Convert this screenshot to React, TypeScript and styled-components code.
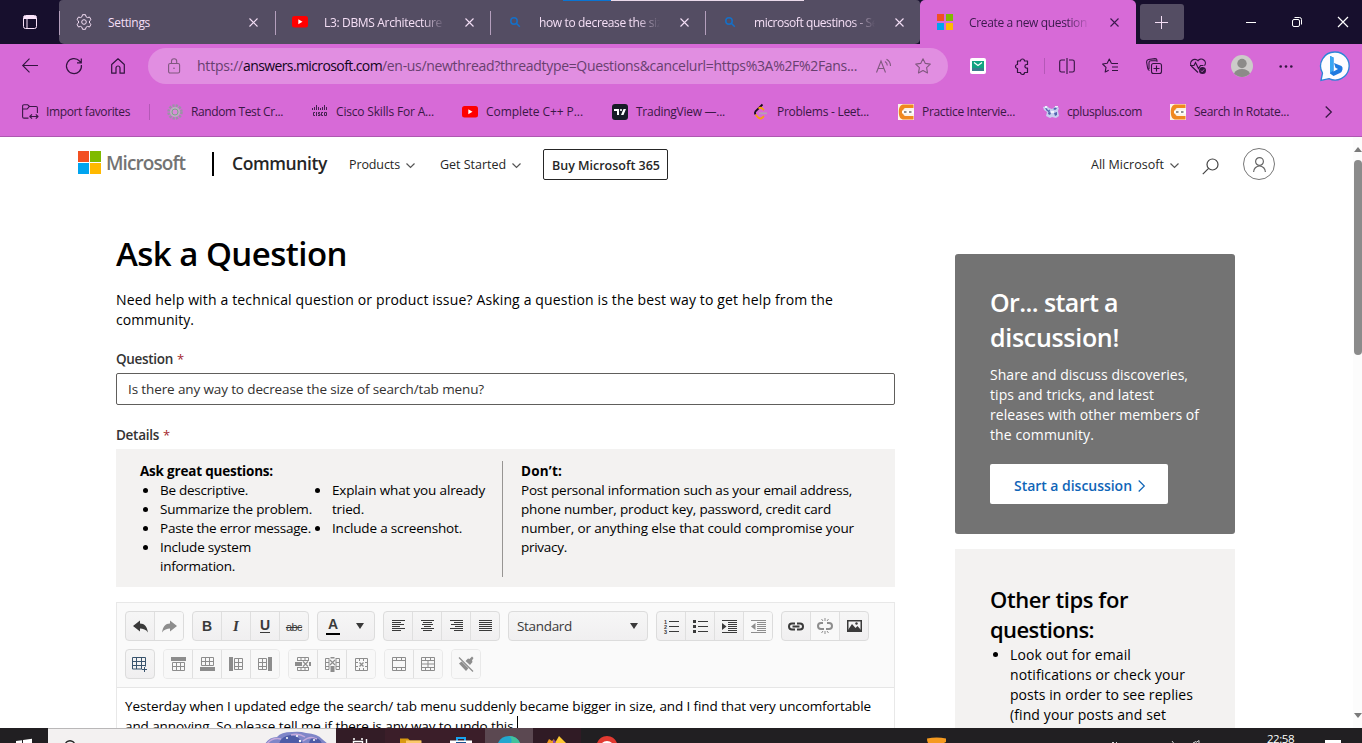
import React, { useLayoutEffect, useRef, useState } from "react";
import styled, { createGlobalStyle, css } from "styled-components";

const GlobalStyle = createGlobalStyle`
  * { box-sizing: border-box; }
  html, body { margin: 0; padding: 0; overflow: hidden; }
  body { font-family: "Open Sans", "Noto Sans", sans-serif; background: #fff; }
  ul, p, h1, h2 { margin: 0; padding: 0; font-weight: inherit; }
`;

/* ---------- text ---------- */

const TextSpan = styled.span<{ $size: number; $weight: number; $color?: string }>`
  display: inline-block;
  white-space: pre;
  font-size: ${(p) => p.$size}px;
  font-weight: ${(p) => p.$weight};
  ${(p) => p.$color && css`color: ${p.$color};`}
`;

type TextProps = { w: number; size?: number; weight?: number; color?: string; children: string };

/* One line of text whose tracking is tuned so that it spans exactly w pixels. */
function Text({ w, size = 14, weight = 400, color, children }: TextProps) {
  const ref = useRef<HTMLSpanElement>(null);
  const [tracking, setTracking] = useState(0);
  useLayoutEffect(() => {
    if (ref.current) {
      const natural = ref.current.getBoundingClientRect().width;
      setTracking((w - natural) / children.length);
    }
  }, [w, children]);
  return (
    <TextSpan ref={ref} $size={size} $weight={weight} $color={color} style={{ letterSpacing: tracking }}>
      {children}
    </TextSpan>
  );
}

/* ---------- icons ---------- */

const Svg = styled.svg`
  display: block;
  flex: none;
  overflow: visible;
`;

type IconProps = { w?: number; h?: number; color?: string; sw?: number; fill?: string; children: React.ReactNode };
const Icon = ({ w = 16, h = 16, color = "currentColor", sw = 1, fill = "none", children }: IconProps) => (
  <Svg width={w} height={h} viewBox={`0 0 ${w} ${h}`} fill={fill} stroke={color} strokeWidth={sw}>
    {children}
  </Svg>
);

const CloseIcon = () => <Icon w={9} h={9} sw={1.1}><path d="M.5.5l8 8M8.5.5l-8 8" /></Icon>;
const GearIcon = () => (
  <Icon>
    <path strokeLinejoin="round" d="M6.5.7h3l.5 2 1.5.9 2-.6 1.5 2.6L13.500 7v2l1.500 1.400-1.500 2.600-2-.6-1.500.9-.5 2h-3l-.5-2-1.500-.9-2 .6L1 10.400 2.500 9V7L1 5.600 2.500 3l2 .6L6 2.700z" />
    <circle cx="8" cy="8" r="2.300" />
  </Icon>
);
const YouTubeIcon = () => (
  <Icon w={16} h={12} color="none">
    <rect width="16" height="11.500" rx="2.500" fill="#f00" /><path d="M6.300 3.300l4.200 2.500-4.200 2.500z" fill="#fff" />
  </Icon>
);
const SearchBlueIcon = () => (
  <Icon w={10} h={10} color="#1570c8" sw={1.500}><circle cx="4" cy="4" r="3.200" /><path d="M6.300 6.300l3.500 3.500" /></Icon>
);
const WindowsTiles = ({ s, gap }: { s: number; gap: number }) => (
  <Icon w={s * 2 + gap} h={s * 2 + gap} color="none">
    <rect width={s} height={s} fill="#f25022" />
    <rect x={s + gap} width={s} height={s} fill="#7fba00" />
    <rect y={s + gap} width={s} height={s} fill="#00a4ef" />
    <rect x={s + gap} y={s + gap} width={s} height={s} fill="#ffb900" />
  </Icon>
);
const ChevronDown = () => <Icon w={9} h={5} color="#555" sw={1.200}><path d="M.5.5l4 4 4-4" /></Icon>;
const CodingNinjasIcon = () => (
  <Icon color="none">
    <rect width="16" height="16" fill="#fbf3e8" />
    <path d="M15.500 0.500H6C2.500.5.8 3 .8 8s1.700 7.500 5.200 7.500h9.500v-3.500H7.500c-1.500 0-2.500-1.200-2.500-4s1-4 2.500-4h8z" fill="#f0881f" />
    <path d="M4 6.500h12v3H4z" fill="#fff" /><path d="M6 7.500h2.500v1H6zM11 7.500h2.500v1H11z" fill="#222" />
  </Icon>
);

/* ---------- tab strip ---------- */

const Screen = styled.div`
  width: 1362px;
  height: 743px;
  display: flex;
  flex-direction: column;
  overflow: hidden;
  background: #fff;
  position: relative;
`;
const LoadingLine = styled.div`
  position: absolute;
  top: 0;
  left: 563px;
  width: 241px;
  height: 1px;
  background: linear-gradient(90deg, #0a74d2 48px, #ead9ea 48px);
`;
const TabStrip = styled.div`
  height: 44px;
  flex: none;
  display: flex;
  background: #170f2d;
  color: #f5dff6;
`;
const TabMenu = styled.div`
  width: 59px;
  display: flex;
  align-items: center;
  justify-content: center;
  padding-left: 1px;
`;
const InactiveTabs = styled.div`
  display: flex;
  width: 861px;
  background: #544d63;
  border-radius: 4px 4px 5px 5px;
`;
const Tab = styled.div<{ $w: number; $active?: boolean }>`
  width: ${(p) => p.$w}px;
  height: 44px;
  display: flex;
  align-items: center;
  color: ${(p) => (p.$active ? "#3b1a4d" : "#f5dff6")};
  background: ${(p) => (p.$active ? "#d76ad7" : "transparent")};
  border-radius: ${(p) => (p.$active ? "5px 5px 0 0" : "0")};
  &::before {
    content: "";
    width: 1px;
    height: 24px;
    margin-top: 1px;
    background: ${(p) => (p.$active ? "transparent" : "#b59fbd")};
  }
`;
const TabIcon = styled.div`
  width: 24px;
  margin: 0 12px;
  display: flex;
  justify-content: center;
`;
const TabTitle = styled.div<{ $fade?: boolean }>`
  width: 126px;
  overflow: hidden;
  line-height: 20px;
  ${(p) => p.$fade && css`
    -webkit-mask-image: linear-gradient(90deg, #000 98px, transparent 121px);
    mask-image: linear-gradient(90deg, #000 98px, transparent 121px);
  `}
`;
const TabClose = styled.div`
  margin-left: 15px;
`;
const NewTab = styled.div`
  width: 44px;
  height: 36px;
  margin: 4px 0 0 4px;
  padding-right: 1px;
  border-radius: 3px;
  background: #544d63;
  display: flex;
  align-items: center;
  justify-content: center;
`;
const WindowControls = styled.div`
  display: flex;
  margin-left: auto;
  margin-right: -4px;
`;
const WindowControl = styled.div`
  width: 46px;
  display: flex;
  align-items: center;
  justify-content: center;
  color: #fff;
`;

const tabs = [
  { title: "Settings", slot: 216, w: 42, icon: <GearIcon /> },
  { title: "L3: DBMS Architecture", slot: 215, w: 118, icon: <YouTubeIcon />, fade: true },
  { title: "how to decrease the siz", slot: 215, w: 123, icon: <SearchBlueIcon />, fade: true },
  { title: "microsoft questinos - Se", slot: 215, w: 124, icon: <SearchBlueIcon />, fade: true },
];

/* ---------- navigation bar ---------- */

const NavBar = styled.div`
  height: 44px;
  flex: none;
  display: flex;
  align-items: center;
  padding-left: 8px;
  background: #d76ad7;
  color: #32143f;
`;
const NavSlot = styled.div<{ $w?: number }>`
  width: ${(p) => p.$w ?? 44}px;
  flex: none;
  display: flex;
  justify-content: center;
  align-items: center;
`;
const AddressBar = styled.div`
  width: 800px;
  height: 36px;
  margin: 0 8px;
  display: flex;
  align-items: center;
  border-radius: 18px;
  background: #e18ee1;
  color: #80587f;
`;
const Url = styled.div`
  width: 662px;
  margin-left: 17px;
  padding-bottom: 1px;
  line-height: 22px;
  white-space: nowrap;
`;
const AddressSlot = styled.div<{ $ml: number }>`
  margin-left: ${(p) => p.$ml}px;
`;
const NavDivider = styled.div`
  width: 1px;
  height: 16px;
  background: #b458b7;
`;
const Favorites = styled.div`
  height: 49px;
  flex: none;
  display: flex;
  align-items: center;
  padding-left: 22px;
  background: #d76ad7;
  border-bottom: 1px solid #ad58b0;
  color: #3a1846;
`;
const Favorite = styled.div<{ $w: number }>`
  width: ${(p) => p.$w}px;
  height: 24px;
  display: flex;
  align-items: center;
  gap: 8px;
  line-height: 20px;
`;
const FavoriteDivider = styled.div`
  width: 1px;
  height: 16px;
  margin-left: 11px;
  background: #b458b7;
`;

const favorites = [
  {
    title: "Random Test Cr...", w: 92, slot: 145,
    icon: (
      <Icon color="none">
        <circle cx="8" cy="8" r="6.500" fill="none" stroke="#9a93a5" strokeWidth="2.500" strokeDasharray="2.200 1.200" />
        <circle cx="8" cy="8" r="5" fill="#b8b2bd" /><circle cx="8" cy="8" r="3" fill="#d88bd8" stroke="#7fa08c" />
      </Icon>
    ),
  },
  {
    title: "Cisco Skills For A...", w: 98, slot: 150,
    icon: (
      <Icon color="#43224f" sw={1}>
        <path d="M.5 4v2M2.500 3v3M4.500 1v5M6.500 3v3M8.500 4v2M10.500 3v3M12.500 1v5M14.500 3v3" />
        <path d="M3 8.500H1.500v3H3M4.500 8v4M8 8.500H6.500v1.500H8v1.500H6M11 8.500H9.500v3H11M12.500 8.500h2v3h-2z" />
      </Icon>
    ),
  },
  { title: "Complete C++ P...", w: 97, slot: 150, icon: <YouTubeIcon /> },
  {
    title: "TradingView —...", w: 89, slot: 141,
    icon: (
      <Icon color="none">
        <rect width="16" height="16" rx="3" fill="#171b26" />
        <path d="M2 5h5v6H5V7H2zM11.500 5H14l-2.500 6H9z" fill="#fff" /><circle cx="9" cy="6" r="1.100" fill="#fff" />
      </Icon>
    ),
  },
  {
    title: "Problems - Leet...", w: 92, slot: 145,
    icon: (
      <Icon sw={1.800}>
        <path d="M9.500.5L2.500 7.300Q1.300 9 2.500 10.500" stroke="#160c18" />
        <path d="M2.500 10.500l2.700 3q2.300 2 4.300 0l1.500-1.400M5.500 4.500q2-1.500 4 .2l1.400 1.400" stroke="#f5a010" />
        <path d="M6 9.300h8" stroke="#b5a3b5" />
      </Icon>
    ),
  },
  { title: "Practice Intervie...", w: 93, slot: 145, icon: <CodingNinjasIcon /> },
  {
    title: "cplusplus.com", w: 75, slot: 127,
    icon: (
      <Icon color="none">
        <path d="M0 3l4-1 2 2 3 1 4-3 3 2-1 3 1 5-3 2-4-1-2 1-4-2 1-4-3-2z" fill="#c8cff0" />
        <path d="M2 4l2 .5 1 2 2-1-.5 2.500 1.500 1-1 2-2-1 .5-2-2-1.500zM10 5l2-1.500 2 1-2 1.500zM11 9l3-1v3l-2 1z" fill="#5064ad" />
        <path d="M2 2h2v2H2zM12 2h3v1h-3zM8 7h3v2H8z" fill="#f0f4ff" />
      </Icon>
    ),
  },
  { title: "Search In Rotate...", w: 95, slot: 154, icon: <CodingNinjasIcon /> },
];

/* ---------- page ---------- */

const Viewport = styled.div`
  height: 591px;
  flex: none;
  display: flex;
  overflow: hidden;
  background: #fff;
`;
const Page = styled.div`
  width: 1353px;
  display: flex;
  flex-direction: column;
`;
const Scrollbar = styled.div`
  width: 9px;
  display: flex;
  flex-direction: column;
  align-items: center;
  background: #fcfcfc;
  padding: 10px 0 10px 1px;
`;
const ScrollThumb = styled.div`
  width: 8px;
  height: 195px;
  margin: 8px 0 auto;
  border-radius: 4px;
  background: #8b8b8b;
`;
const SiteHeader = styled.header`
  height: 54px;
  flex: none;
  display: flex;
  align-items: center;
  padding-left: 78px;
  color: #262626;
  line-height: 24px;
`;
const Brand = styled.div`
  width: 134px;
  display: flex;
  align-items: center;
  gap: 5px;
  margin-top: -3px;
`;
const BrandBar = styled.div`
  width: 2px;
  height: 24px;
  margin-right: 18px;
  background: #000;
`;
const SiteName = styled.div`
  width: 117px;
  padding-bottom: 2px;
`;
const MenuItem = styled.div<{ $w: number }>`
  width: ${(p) => p.$w}px;
  padding-top: 2px;
  display: flex;
  align-items: center;
  gap: 6px;
`;
const BuyButton = styled.div`
  width: 125px;
  height: 31px;
  margin-top: 1px;
  padding: 2px 0 0 1px;
  border: 1px solid #262626;
  border-radius: 2px;
  display: flex;
  justify-content: center;
  align-items: center;
`;
const HeaderTools = styled.div`
  display: flex;
  align-items: center;
  margin-left: 423px;
`;
const SearchButton = styled.div`
  padding-top: 4px;
`;
const AccountRing = styled.div`
  width: 32px;
  height: 32px;
  margin-left: 24px;
  border: 1px solid #777;
  border-radius: 50%;
  display: flex;
  justify-content: center;
  align-items: center;
`;
const Columns = styled.div`
  display: flex;
  gap: 60px;
  padding-left: 116px;
`;
const MainColumn = styled.main`
  width: 779px;
  padding-top: 38px;
`;
const Title = styled.h1`
  line-height: 50px;
  height: 50px;
  color: #000;
`;
const Lines = styled.div<{ $lh: number; $mt?: number; $pl?: number }>`
  display: flex;
  flex-direction: column;
  align-items: flex-start;
  line-height: ${(p) => p.$lh}px;
  margin-top: ${(p) => p.$mt ?? 0}px;
  padding-left: ${(p) => p.$pl ?? 0}px;
  & > * { height: ${(p) => p.$lh}px; }
`;
const Label = styled.div<{ $mt: number }>`
  height: 20px;
  line-height: 20px;
  margin-top: ${(p) => p.$mt}px;
  display: flex;
  gap: 4px;
  color: #333;
`;
const Required = styled.span`
  font-size: 13px;
  color: #a4262c;
`;
const QuestionInput = styled.div`
  height: 32px;
  margin-top: 4px;
  border: 1px solid #605e5c;
  border-radius: 2px;
  padding-left: 11px;
  line-height: 29px;
  color: #323130;
`;
const Guidance = styled.section`
  height: 138px;
  margin-top: 4px;
  padding: 12px 0 0 24px;
  display: flex;
  background: #f3f2f1;
  color: #000;
`;
const GuidanceDo = styled.div`
  width: 363px;
  height: 116px;
  padding-top: 1px;
  border-right: 1px solid #979593;
`;
const GuidanceDont = styled.div`
  padding: 1px 0 0 18px;
`;
const BulletColumns = styled.div`
  display: flex;
`;
const BulletList = styled.ul<{ $w: number; $lh: number }>`
  list-style: none;
  width: ${(p) => p.$w}px;
  line-height: ${(p) => p.$lh}px;
`;
const BulletItem = styled.li`
  display: flex;
  &::before {
    content: "";
    width: 5px;
    height: 5px;
    margin: 7px 12px 0 3px;
    border-radius: 50%;
    background: #000;
    flex: none;
  }
`;

/* ---------- editor ---------- */

const Editor = styled.section`
  margin-top: 15px;
  height: 160px;
  border: 1px solid #e8e8e8;
  background: #fff;
`;
const EditorTools = styled.div`
  height: 85px;
  padding: 8px;
  display: flex;
  flex-direction: column;
  gap: 8px;
  background: #fafafa;
  border-bottom: 1px solid #e6e6e6;
`;
const ToolRow = styled.div`
  display: flex;
  gap: 8px;
`;
const ToolGroup = styled.div<{ $dim?: boolean; $plain?: boolean }>`
  display: flex;
  height: 30px;
  border: 1px solid ${(p) => (p.$dim ? "#e9e9e9" : "#dcdcdc")};
  border-radius: 4px;
  background: ${(p) => (p.$dim ? "#f7f7f7" : "linear-gradient(#f6f6f6, #f0eff0)")};
  overflow: hidden;
  & > * + * {
    box-sizing: content-box;
    border-left: ${(p) => (p.$plain ? "0" : "1px solid #dfdfdf")};
  }
`;
const Tool = styled.div<{ $off?: boolean }>`
  width: 28px;
  height: 28px;
  flex: none;
  display: flex;
  align-items: center;
  justify-content: center;
  color: ${(p) => (p.$off ? "#8d8d8d" : "#3a3a3a")};
  background: ${(p) => (p.$off ? "#f8f8f8" : "transparent")};
`;
const StyleSelect = styled.div`
  width: 140px;
  height: 30px;
  display: flex;
  align-items: center;
  justify-content: space-between;
  padding: 0 9px 0 8px;
  border: 1px solid #dcdcdc;
  border-radius: 4px;
  background: linear-gradient(#f6f6f6, #f0eff0);
  color: #3a3a3a;
`;
const Glyph = styled.span<{ $italic?: boolean; $underline?: boolean }>`
  font: ${(p) => (p.$italic ? 'italic bold 15px "Liberation Serif", serif' : 'bold 14px "Liberation Sans", sans-serif')};
  ${(p) => p.$underline && css`border-bottom: 1px solid #3a3a3a; line-height: 13px; height: 14px;`}
`;
const StrikeGlyph = styled.span`
  font: 11px "Liberation Sans", sans-serif;
  letter-spacing: -0.5px;
  text-decoration: line-through;
  padding-top: 2px;
`;
const ColorGlyph = styled.span`
  font: bold 14px/14px "Liberation Sans", sans-serif;
  width: 14px;
  height: 18px;
  margin-left: 2px;
  text-align: center;
  border-bottom: 2px solid #000;
`;
const Caret = styled.span`
  display: inline-block;
  width: 1px;
  height: 15px;
  background: #000;
`;
const TypedLine = styled.div`
  display: flex;
`;

const TriDown = () => <Icon w={8} h={6} color="none"><path d="M0 0h8L4 6z" fill="#3a3a3a" /></Icon>;
const UndoIcon = ({ flip }: { flip?: boolean }) => (
  <Icon w={15} h={13} color="none">
    <path transform={flip ? "translate(15 0) scale(-1 1)" : undefined} d="M0 6L7 .5v3c4.500 0 7 3 8 9C13 9.500 10 8.500 7 8.500v3z" fill="currentColor" />
  </Icon>
);
const AlignIcon = ({ rows }: { rows: number[][] }) => (
  <Icon w={13} h={12}>
    {rows.map(([a, b], i) => <path key={i} d={`M${a} ${i * 2 + 0.5}H${b}`} />)}
  </Icon>
);
const alignRows = {
  left: [[0, 13], [0, 9], [0, 12], [0, 8], [0, 13], [0, 9]],
  center: [[0, 13], [2, 11], [1, 12], [3, 10], [0, 13], [2, 11]],
  right: [[0, 13], [4, 13], [1, 13], [5, 13], [0, 13], [4, 13]],
  full: [[0, 13], [0, 13], [0, 13], [0, 13], [0, 13], [0, 13]],
};
const NumberTiny = styled.text`
  font: bold 5.500px "Liberation Sans", sans-serif;
  fill: currentColor;
  stroke: none;
`;
const OrderedIcon = () => (
  <Icon w={15} h={14}>
    <path d="M5 2.500h10M5 7.500h10M5 12.500h10" />
    <NumberTiny x="0" y="4.500">1</NumberTiny><NumberTiny x="0" y="9.500">2</NumberTiny><NumberTiny x="0" y="14.500">3</NumberTiny>
  </Icon>
);
const BulletsIcon = () => (
  <Icon w={15} h={13}>
    <path d="M5 1.500h10M5 6.500h10M5 11.500h10" />
    <path d="M0 1.500h3M0 6.500h3M0 11.500h3" strokeWidth="3" />
  </Icon>
);
const IndentIcon = ({ out }: { out?: boolean }) => (
  <Icon w={15} h={13}>
    <path d="M0 .5h15M6 2.500h9M6 4.500h9M6 6.500h9M6 8.500h9M6 10.500h9M0 12.500h15" />
    <path d={out ? "M4.500 3v7L0 6.500z" : "M0 3v7l4.500-3.500z"} fill="currentColor" stroke="none" />
  </Icon>
);
const LinkIcon = () => (
  <Icon w={16} h={9} sw={2}>
    <path d="M7 1.500H4a3 3 0 000 6h3M9 1.500h3a3 3 0 010 6H9M4.500 4.500h7" />
  </Icon>
);
const UnlinkIcon = () => (
  <Icon w={16} h={16} sw={2}>
    <path d="M6 5H4a3 3 0 000 6h3M10 5h2a3 3 0 010 6H9" />
    <path d="M8 0v3M4.500 1l1.500 2M11.500 1L10 3M8 13v3M4.500 15L6 13M11.500 15L10 13" strokeWidth="1" />
  </Icon>
);
const ImageIcon = () => (
  <Icon w={15} h={12} sw={1.500}>
    <rect x=".75" y=".75" width="13.500" height="10.500" />
    <path d="M1 10l4-6 3.500 4L10.500 6 14 10v1H1z" fill="currentColor" stroke="none" />
    <circle cx="9.500" cy="3.500" r="1.200" fill="currentColor" stroke="none" />
  </Icon>
);
const InsertTableIcon = () => (
  <Icon w={16} h={16} color="#39546d">
    <path d="M.5 1.500h13v9M.5 1.500v11.500h9.500M.5 5.500h13M.5 9.500h13M4.500 1v12M9.500 1v12M12.500 11v5M10 13.500h5" />
  </Icon>
);
const RowAbove = () => (
  <Icon w={15} h={14}><path d="M0 2h15" strokeWidth="4" /><path d="M1.500 5.500h12v8h-12zM1.500 9.500h12M5.500 5v9M9.500 5v9" /></Icon>
);
const RowBelow = () => (
  <Icon w={15} h={14}><path d="M0 12h15" strokeWidth="4" /><path d="M1.500.5h12v8h-12zM1.500 4.500h12M5.500 0v9M9.500 0v9" /></Icon>
);
const ColLeft = () => (
  <Icon w={14} h={14}><path d="M2 0v14" strokeWidth="4" /><path d="M5.500 1.500h8v11h-8zM5 5.500h9M5 9.500h9M9.500 1v12" /></Icon>
);
const ColRight = () => (
  <Icon w={14} h={14}><path d="M12 0v14" strokeWidth="4" /><path d="M.5 1.500h8v11h-8zM0 5.500h9M0 9.500h9M4.500 1v12" /></Icon>
);
const DeleteRow = () => (
  <Icon w={16} h={14}>
    <path d="M2.500 4V.5h11V4M6 0v4M10 0v4M2.500 10v3.500h11V10M6 10v4M10 10v4M2 3.500h12M2 10.500h12" />
    <path d="M0 7h7M14 7h2" strokeWidth="4" /><path d="M8 4.500l5 5M13 4.500l-5 5" strokeWidth="1.200" />
  </Icon>
);
const DeleteCol = () => (
  <Icon w={15} h={15}>
    <path d="M4 1.500H.5v11H4V1M11 1v11.500h3.500v-11H11M0 5.500h4M0 9.500h4M11 5.500h4M11 9.500h4" />
    <path d="M7.500 9v6M7.500 0v1.500" strokeWidth="4" /><path d="M5 3l5 5M10 3L5 8" strokeWidth="1.200" />
  </Icon>
);
const DeleteTable = () => (
  <Icon w={13} h={13}>
    <path d="M.5.5h12v12H.5zM4.500 0v3M8.500 0v3M0 4.500h3M0 8.500h3M10 4.500h3M10 8.500h3M4.500 10v3M8.500 10v3" />
    <path d="M4.500 4.500l4 4M8.500 4.500l-4 4" strokeWidth="1.300" />
  </Icon>
);
const MergeIcon = () => (
  <Icon w={14} h={14}><path d="M.5.5h13v13H.5zM0 3.500h14M0 10.500h14M4.500 0v3M9.500 0v3M4.500 11v3M9.500 11v3" /></Icon>
);
const SplitCellIcon = () => (
  <Icon w={14} h={14}><path d="M.5.5h13v13H.5zM0 3.500h14M0 7h14M0 10.500h14M4.500 0v4M9.500 0v4M7 4v6M4.500 10v4M9.500 10v4" /></Icon>
);
const CleanIcon = () => (
  <Icon w={16} h={16}>
    <path d="M1 7.500L5.500 4l6.500 6.500L8 15z" fill="currentColor" stroke="none" />
    <path d="M7.500 5L10 2.500l1.500.5L14 .5 15.500 2 14 4.500l.5 1.500L12 9z" fill="currentColor" stroke="none" />
    <path d="M1.500 1.500l13 13" stroke="#f8f8f8" strokeWidth="2.500" /><path d="M1 1.500l14 14" strokeWidth="1.200" />
  </Icon>
);

/* ---------- sidebar ---------- */

const Sidebar = styled.aside`
  width: 280px;
  padding-top: 63px;
  display: flex;
  flex-direction: column;
  gap: 15px;
`;
const DiscussionCard = styled.section`
  height: 280px;
  padding: 31px 35px;
  border-radius: 3px;
  background: #737373;
  color: #fff;
`;
const DiscussionButton = styled.div`
  width: 178px;
  height: 40px;
  margin-top: 19px;
  border-radius: 2px;
  display: flex;
  align-items: center;
  padding: 3px 0 0 24px;
  gap: 6px;
  background: #fff;
  color: #0f65b8;
`;
const TipsCard = styled.section`
  height: 260px;
  padding: 35px;
  background: #f3f2f1;
  color: #000;
`;

/* ---------- taskbar ---------- */

const Taskbar = styled.footer`
  height: 15px;
  flex: none;
  display: flex;
  overflow: hidden;
  background: #211f22;
`;
const TaskCell = styled.div<{ $w: number; $bg?: string; $ml?: number }>`
  width: ${(p) => p.$w}px;
  height: 15px;
  flex: none;
  margin-left: ${(p) => p.$ml ?? 0}px;
  display: flex;
  justify-content: center;
  background: ${(p) => p.$bg ?? "transparent"};
`;
const TaskSearch = styled.div`
  width: 288px;
  height: 16px;
  flex: none;
  border-top: 1px solid #b9b7b8;
  background: #f3f1f1;
  display: flex;
  justify-content: space-between;
  padding: 0 5px 0 16px;
`;
const Clock = styled.div`
  width: 45px;
  margin-top: -1px;
  line-height: 20px;
  color: #fff;
`;

export default function App() {
  return (
    <Screen>
      <GlobalStyle />
      <TabStrip>
        <TabMenu>
          <Icon w={14} h={14} color="#fbe3fb">
            <rect x=".5" y=".5" width="13" height="13" rx="2" />
            <path d="M1 2.500h12" strokeWidth="3" /><path d="M4 4v9" />
          </Icon>
        </TabMenu>
        <InactiveTabs>
          {tabs.map((t) => (
            <Tab key={t.title} $w={t.slot}>
              <TabIcon>{t.icon}</TabIcon>
              <TabTitle $fade={t.fade}><Text w={t.w} size={12}>{t.title}</Text></TabTitle>
              <TabClose><CloseIcon /></TabClose>
            </Tab>
          ))}
        </InactiveTabs>
        <Tab $w={216} $active>
          <TabIcon><WindowsTiles s={7} gap={2} /></TabIcon>
          <TabTitle $fade><Text w={118} size={12}>Create a new question</Text></TabTitle>
          <TabClose><CloseIcon /></TabClose>
        </Tab>
        <NewTab><Icon w={13} h={13}><path d="M6.500 0v13M0 6.500h13" /></Icon></NewTab>
        <WindowControls>
          <WindowControl><Icon w={10} h={2}><path d="M0 1.500h10" /></Icon></WindowControl>
          <WindowControl>
            <Icon w={10} h={10}><rect x=".5" y="2.500" width="7" height="7" rx="1.500" /><path d="M2.500.5H7.500q2 0 2 2v5" /></Icon>
          </WindowControl>
          <WindowControl><Icon w={10} h={10} sw={1.200}><path d="M0 0l10 10M10 0L0 10" /></Icon></WindowControl>
        </WindowControls>
      </TabStrip>
      <LoadingLine />

      <NavBar>
        <NavSlot><Icon sw={1.100}><path d="M16 7.500H.7M7.500.7L.7 7.500l6.800 6.800" /></Icon></NavSlot>
        <NavSlot><Icon sw={1.200}><path d="M15.400 7A7.500 7.500 0 1113.500 3L15 4.500M15.300.5v4.300H11" /></Icon></NavSlot>
        <NavSlot>
          <Icon w={14} sw={1.200}><path strokeLinejoin="round" d="M.7 6.500L7 .8l6.300 5.700v8.700H9V10a2 2 0 00-4 0v5.200H.7z" /></Icon>
        </NavSlot>
        <AddressBar>
          <AddressSlot $ml={20}>
            <Icon w={12} h={16} sw={1.100}>
              <rect x=".6" y="5.500" width="11" height="9.500" rx="1.500" /><path d="M3.500 5.500V3.300a2.600 2.600 0 015.200 0v2.200" />
              <circle cx="6" cy="10.300" r=".8" fill="currentColor" stroke="none" />
            </Icon>
          </AddressSlot>
          <Url>
            <Text w={46} size={14} color="#68406f">https://</Text>
            <Text w={139} size={14} color="#12051a">answers.microsoft.com</Text>
            <Text w={475} size={14} color="#68406f">/en-us/newthread?threadtype=Questions&cancelurl=https%3A%2F%2Fans...</Text>
          </Url>
          <AddressSlot $ml={17}>
            <Icon w={15} h={14} sw={1.100}>
              <path d="M.5 13.500L5 2l4.500 11.500M2 9.500h6" /><path d="M9 2.500q2.300 1.500 2.300 4M10.500.3Q14.500 2.500 14.500 7" />
            </Icon>
          </AddressSlot>
          <AddressSlot $ml={24}>
            <Icon sw={1.100}><path strokeLinejoin="round" d="M8 .7l2.300 4.700 5 .7-3.700 3.600.9 5.200L8 12.500l-4.500 2.400.9-5.200L.7 6.100l5-.7z" /></Icon>
          </AddressSlot>
        </AddressBar>
        <NavSlot>
          <Icon color="none">
            <rect width="16" height="16" rx="2" fill="#fff" /><rect x="2" y="3" width="12" height="7" fill="#11a480" />
            <rect x="2" y="10" width="12" height="3" fill="#3b7d8d" /><path d="M4 4.500l4 3 4-3" stroke="#fff" strokeWidth="1.200" fill="none" />
          </Icon>
        </NavSlot>
        <NavSlot>
          <Icon sw={1.200}>
            <path strokeLinejoin="round" d="M3.500 3h3a2 2 0 014 0h3V6.500h-.8a1.800 1.800 0 000 3.600h.8V14.500h-3a2 2 0 01-4 0h-3v-4a2 2 0 010-4z" />
          </Icon>
        </NavSlot>
        <NavDivider />
        <NavSlot $w={43}><Icon sw={1.100}><path d="M6 2H2.500q-1.800 0-1.800 1.800v8.400q0 1.800 1.800 1.800H6M10 2h3.500q1.800 0 1.800 1.800v8.400q0 1.800-1.800 1.800H10M8 0v16" /></Icon></NavSlot>
        <NavSlot>
          <Icon sw={1.100}><path strokeLinejoin="round" d="M9.500 5.500L7.300 1 5.200 5.300.6 6l3.400 3.300-.8 4.700 3.500-1.800M9.500 5.500H16M10 9h6M10 12.500h6" /></Icon>
        </NavSlot>
        <NavSlot>
          <Icon sw={1.100}>
            <rect x="5.500" y="5.500" width="10" height="10" rx="2" /><path d="M10.500 7.500v6M7.500 10.500h6M3.500 12.500Q2 12 1.600 10L.6 4Q.6 2 2.500 1.500L9 .6q1.800 0 2.200 1.900M11.500 3.500q-.5-.8-2-.8H5Q3 2.700 3 4.500V11" />
          </Icon>
        </NavSlot>
        <NavSlot>
          <Icon sw={1.200}>
            <path d="M8 14.500L1.800 8.500A4 4 0 018 2.700a4 4 0 016.500 5M0 7.500h4l1.500-3 3 6 2-3h3" />
            <circle cx="12.500" cy="12.500" r="3.500" fill="#32143f" stroke="none" /><path d="M11 12.600l1.100 1.200 2-2.400" stroke="#d76ad7" strokeWidth=".8" />
          </Icon>
        </NavSlot>
        <NavSlot>
          <Icon w={22} h={22} color="none">
            <circle cx="11" cy="11" r="11" fill="#cccbc9" /><circle cx="11" cy="8.500" r="4.700" fill="#8c8b89" />
            <path d="M3 18.500Q5 14 11 14t8 4.500A11 11 0 013 18.500z" fill="#8c8b89" />
          </Icon>
        </NavSlot>
        <NavSlot>
          <Icon w={14} h={3} color="none"><g fill="#32143f"><circle cx="1.700" cy="1.500" r="1.300" /><circle cx="7" cy="1.500" r="1.300" /><circle cx="12.300" cy="1.500" r="1.300" /></g></Icon>
        </NavSlot>
        <NavSlot $w={54}>
          <Icon w={30} h={30} color="none">
            <path d="M15 1a14 14 0 11-6 26.600L1 29.500l1.500-7.500A14 14 0 0115 1z" fill="#fdfcff" stroke="#2b84d8" strokeWidth="1.300" />
            <path d="M10 5l3.500 1.500v14L18 18l-2.500-1.300L14 12l7.500 3q1.500 1 1 3.500T20 22l-6.500 3-3.500-2.500z" fill="#1f7ae0" />
            <path d="M10 5l3.500 1.500v13L10 22z" fill="#3aa6f2" />
          </Icon>
        </NavSlot>
      </NavBar>

      <Favorites>
        <Favorite $w={145}>
          <Icon sw={1.100}>
            <path strokeLinejoin="round" d="M15.400 9V3.800q0-1.300-1.300-1.300H7.500L5.800.8H2Q.6.800.6 2.200v10.500q0 1.400 1.400 1.400h4.500M.6 5h4.600l2-2.400M8 12.500h8M10 10.300l-2.200 2.200L10 14.700M13.800 10.300l2.200 2.200-2.200 2.200" />
          </Icon>
          <Text w={84} size={12}>Import favorites</Text>
          <FavoriteDivider />
        </Favorite>
        {favorites.map((f) => (
          <Favorite key={f.title} $w={f.slot}>{f.icon}<Text w={f.w} size={12}>{f.title}</Text></Favorite>
        ))}
        <Icon w={8} h={12} sw={1.300}><path d="M1.700.5L7.300 6l-5.600 5.500" /></Icon>
      </Favorites>

      <Viewport>
        <Page>
          <SiteHeader>
            <Brand>
              <WindowsTiles s={11} gap={1} />
              <Text w={79} size={19} weight={600} color="#737373">Microsoft</Text>
            </Brand>
            <BrandBar />
            <SiteName><Text w={95} size={17.5} weight={600}>Community</Text></SiteName>
            <MenuItem $w={91}><Text w={51} size={12.5}>Products</Text><ChevronDown /></MenuItem>
            <MenuItem $w={103}><Text w={66} size={12.5}>Get Started</Text><ChevronDown /></MenuItem>
            <BuyButton><Text w={108} size={12.5} weight={600}>Buy Microsoft 365</Text></BuyButton>
            <HeaderTools>
              <MenuItem $w={111}><Text w={73} size={12.5}>All Microsoft</Text><ChevronDown /></MenuItem>
              <SearchButton>
                <Icon w={17} h={17} color="#444" sw={1.200}><circle cx="10.500" cy="6.500" r="5.500" /><path d="M6.600 10.400L.8 16.200" /></Icon>
              </SearchButton>
              <AccountRing>
                <Icon w={13} h={15} color="#666" sw={1.200}><circle cx="6.500" cy="4.500" r="3.900" /><path d="M.6 15a5.900 6 0 0111.800 0" /></Icon>
              </AccountRing>
            </HeaderTools>
          </SiteHeader>

          <Columns>
            <MainColumn>
              <Title><Text w={231} size={33} weight={600}>Ask a Question</Text></Title>
              <Lines $lh={20} $mt={11}>
                <Text w={717}>Need help with a technical question or product issue? Asking a question is the best way to get help from the</Text>
                <Text w={78}>community.</Text>
              </Lines>
              <Label $mt={19}><Text w={57} size={13.5} weight={600}>Question</Text><Required>*</Required></Label>
              <QuestionInput><Text w={356} size={13.5}>Is there any way to decrease the size of search/tab menu?</Text></QuestionInput>
              <Label $mt={20}><Text w={43} size={13.5} weight={600}>Details</Text><Required>*</Required></Label>
              <Guidance>
                <GuidanceDo>
                  <Lines $lh={19}><Text w={133} size={13.5} weight={700}>Ask great questions:</Text></Lines>
                  <BulletColumns>
                    <BulletList $w={172} $lh={19}>
                      <BulletItem><Text w={88} size={13.5}>Be descriptive.</Text></BulletItem>
                      <BulletItem><Text w={152} size={13.5}>Summarize the problem.</Text></BulletItem>
                      <BulletItem><Text w={151} size={13.5}>Paste the error message.</Text></BulletItem>
                      <BulletItem>
                        <Lines $lh={19}><Text w={91} size={13.5}>Include system</Text><Text w={75} size={13.5}>information.</Text></Lines>
                      </BulletItem>
                    </BulletList>
                    <BulletList $w={180} $lh={19}>
                      <BulletItem>
                        <Lines $lh={19}><Text w={153} size={13.5}>Explain what you already</Text><Text w={32} size={13.5}>tried.</Text></Lines>
                      </BulletItem>
                      <BulletItem><Text w={130} size={13.5}>Include a screenshot.</Text></BulletItem>
                    </BulletList>
                  </BulletColumns>
                </GuidanceDo>
                <GuidanceDont>
                  <Lines $lh={19}>
                    <Text w={41} size={13.5} weight={700}>Don’t:</Text>
                    <Text w={331} size={13.5}>Post personal information such as your email address,</Text>
                    <Text w={310} size={13.5}>phone number, product key, password, credit card</Text>
                    <Text w={333} size={13.5}>number, or anything else that could compromise your</Text>
                    <Text w={46} size={13.5}>privacy.</Text>
                  </Lines>
                </GuidanceDont>
              </Guidance>

              <Editor>
                <EditorTools>
                  <ToolRow>
                    <ToolGroup><Tool><UndoIcon /></Tool><Tool $off><UndoIcon flip /></Tool></ToolGroup>
                    <ToolGroup>
                      <Tool><Glyph>B</Glyph></Tool><Tool><Glyph $italic>I</Glyph></Tool>
                      <Tool><Glyph $underline>U</Glyph></Tool><Tool><StrikeGlyph>abc</StrikeGlyph></Tool>
                    </ToolGroup>
                    <ToolGroup $plain><Tool><ColorGlyph>A</ColorGlyph></Tool><Tool><TriDown /></Tool></ToolGroup>
                    <ToolGroup>
                      <Tool><AlignIcon rows={alignRows.left} /></Tool><Tool><AlignIcon rows={alignRows.center} /></Tool>
                      <Tool><AlignIcon rows={alignRows.right} /></Tool><Tool><AlignIcon rows={alignRows.full} /></Tool>
                    </ToolGroup>
                    <StyleSelect><Text w={55} size={13.5}>Standard</Text><TriDown /></StyleSelect>
                    <ToolGroup>
                      <Tool><OrderedIcon /></Tool><Tool><BulletsIcon /></Tool>
                      <Tool><IndentIcon /></Tool><Tool $off><IndentIcon out /></Tool>
                    </ToolGroup>
                    <ToolGroup><Tool><LinkIcon /></Tool><Tool $off><UnlinkIcon /></Tool><Tool><ImageIcon /></Tool></ToolGroup>
                  </ToolRow>
                  <ToolRow>
                    <ToolGroup><Tool><InsertTableIcon /></Tool></ToolGroup>
                    <ToolGroup $dim>
                      <Tool $off><RowAbove /></Tool><Tool $off><RowBelow /></Tool><Tool $off><ColLeft /></Tool><Tool $off><ColRight /></Tool>
                    </ToolGroup>
                    <ToolGroup $dim><Tool $off><DeleteRow /></Tool><Tool $off><DeleteCol /></Tool><Tool $off><DeleteTable /></Tool></ToolGroup>
                    <ToolGroup $dim><Tool $off><MergeIcon /></Tool><Tool $off><SplitCellIcon /></Tool></ToolGroup>
                    <ToolGroup $dim><Tool $off><CleanIcon /></Tool></ToolGroup>
                  </ToolRow>
                </EditorTools>
                <Lines $lh={20} $mt={8} $pl={8}>
                  <Text w={746} size={13.5}>Yesterday when I updated edge the search/ tab menu suddenly became bigger in size, and I find that very uncomfortable</Text>
                  <TypedLine>
                    <Text w={392} size={13.5}>and annoying. So please tell me if there is any way to undo this.</Text>
                    <Caret />
                  </TypedLine>
                </Lines>
              </Editor>
            </MainColumn>

            <Sidebar>
              <DiscussionCard>
                <Lines $lh={35}>
                  <Text w={128} size={25} weight={600}>Or... start a</Text>
                  <Text w={129} size={25} weight={600}>discussion!</Text>
                </Lines>
                <Lines $lh={20} $mt={10}>
                  <Text w={198}>Share and discuss discoveries,</Text>
                  <Text w={164}>tips and tricks, and latest</Text>
                  <Text w={209}>releases with other members of</Text>
                  <Text w={104}>the community.</Text>
                </Lines>
                <DiscussionButton>
                  <Text w={118} weight={600}>Start a discussion</Text>
                  <Icon w={7} h={12} sw={1.200}><path d="M.7.500L6.300 6 .7 11.500" /></Icon>
                </DiscussionButton>
              </DiscussionCard>
              <TipsCard>
                <Lines $lh={30}>
                  <Text w={138} size={22} weight={600}>Other tips for</Text>
                  <Text w={104} size={22} weight={600}>questions:</Text>
                </Lines>
                <Lines $lh={80} $mt={1}>
                  <BulletList $w={210} $lh={20}>
                    <BulletItem>
                      <Lines $lh={20}>
                        <Text w={121}>Look out for email</Text>
                        <Text w={175}>notifications or check your</Text>
                        <Text w={183}>posts in order to see replies</Text>
                        <Text w={156}>(find your posts and set</Text>
                      </Lines>
                    </BulletItem>
                  </BulletList>
                </Lines>
              </TipsCard>
            </Sidebar>
          </Columns>
        </Page>
        <Scrollbar>
          <Icon w={8} h={5} color="none"><path d="M0 5h8L4 0z" fill="#7a7a7a" /></Icon>
          <ScrollThumb />
          <Icon w={8} h={5} color="none"><path d="M0 0h8L4 5z" fill="#7a7a7a" /></Icon>
        </Scrollbar>
      </Viewport>

      <Taskbar>
        <TaskCell $w={48}>
          <Icon w={16} h={15} color="none"><path d="M0 13l6-.8V15H0zM7 12.100l9-1.300V15H7z" fill="#fff" /></Icon>
        </TaskCell>
        <TaskSearch>
          <Icon w={12} h={15} color="#222" sw={1.400}><circle cx="6" cy="16.500" r="4.800" /></Icon>
          <Icon w={66} h={15} color="none">
            <path d="M0 15Q4 8 12 8q4-5 15-5 8-1 14 1 12 1 16 6l6 5z" fill="#7f86c8" />
            <path d="M14 15q2-8 12-9 10 2 12 9zM44 15q0-5 5-7 7 2 8 7z" fill="#4c5ba6" />
            <path d="M2 15q5-7 14-5M26 6q8-2 14 2M38 12q7-6 14-2" stroke="#c2a9dc" strokeWidth="1.500" />
            <g fill="#fff"><circle cx="22" cy="9" r="1" /><circle cx="32" cy="7" r="1" /><circle cx="35" cy="12" r="1.200" /><circle cx="49" cy="11" r="1" /></g>
          </Icon>
        </TaskSearch>
        <TaskCell $w={49} $bg="#331c26">
          <Icon w={16} h={15} color="#fff" sw={1.400}><path d="M.5 15v-1.500h9V15M0 11h2M8 11h2M13.500 11v4" /></Icon>
        </TaskCell>
        <TaskCell $w={51} $bg="#3b1e29">
          <Icon w={22} h={15} color="none"><path d="M0 10.500h8l2 2h11V15H0z" fill="#d99a10" /><path d="M6 12.500h15.500V15H6z" fill="#fbc96a" /></Icon>
        </TaskCell>
        <TaskCell $w={49} $bg="#3b1e29">
          <Icon w={24} h={15} color="none"><path d="M8 13v-3h8v3" fill="none" stroke="#17a4f0" strokeWidth="2" /><path d="M1 12.500h22V15H1z" fill="#fff" /><path d="M7 14h10v1H7z" fill="#18518f" /></Icon>
        </TaskCell>
        <TaskCell $w={48} $bg="#5b4851">
          <Icon w={24} h={15} color="none"><path d="M1 15Q4 8 12 8t11 7z" fill="#22a7cf" /><path d="M12 8q8 0 11 7h-9q2-4-2-7z" fill="#43c29a" /></Icon>
        </TaskCell>
        <TaskCell $w={48} $bg="#301b25">
          <Icon w={22} h={15} color="none"><path d="M1 15l2-4 3 2 2-2 1 4z" fill="#f29a20" /><path d="M9 15l4-7 7 7z" fill="#ffc933" /><path d="M7 12l3 1-1 2H7z" fill="#8b46a8" /></Icon>
        </TaskCell>
        <TaskCell $w={52}>
          <Icon w={24} h={15} color="none"><path d="M2 15Q5 8 12 8t10 7z" fill="#e23a31" /><path d="M7 15q2-2 5-2t5 2z" fill="#fff" /></Icon>
        </TaskCell>
        <TaskCell $w={48} $ml={280}>
          <Icon w={20} h={15} color="none"><path d="M0 10.500q10-2 19 0v3.500l-2 1H1q-1-1-1-4.500z" fill="#f59a20" /></Icon>
        </TaskCell>
        <TaskCell $w={306}>
          <Icon w={306} h={15} color="#d8d8d8"><path d="M151 14.500h2M155 14.500h1M211 13l1.500 2M232 15l3-1.500M235 14.500l3-2v2.500" /></Icon>
        </TaskCell>
        <Clock><Text w={27} size={11.5}>22:58</Text></Clock>
        <Icon w={29} h={15} color="none"><path d="M13 12h16v3H13z" fill="#fff" /></Icon>
      </Taskbar>
    </Screen>
  );
}
